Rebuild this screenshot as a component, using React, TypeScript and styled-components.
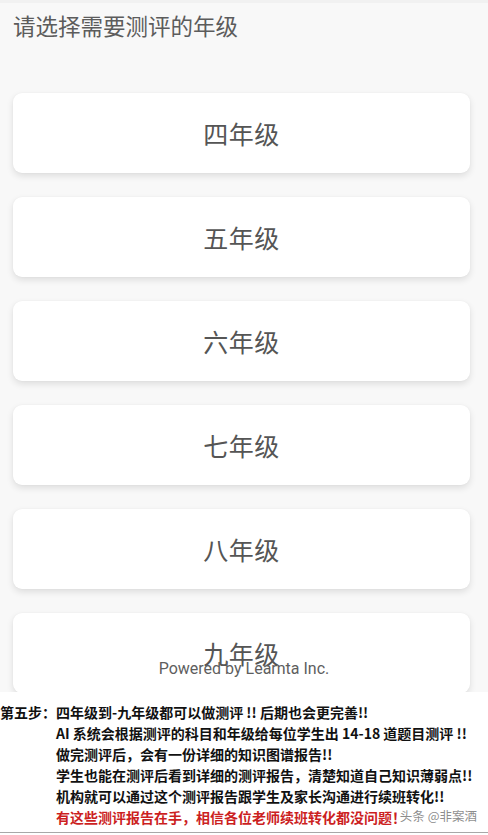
import React from 'react';
import styled, { createGlobalStyle } from 'styled-components';

const GlobalStyle = createGlobalStyle`
    html, body { margin: 0; padding: 0; background: #fff; }
    body { font-family: "Noto Sans CJK SC", "Noto Sans", sans-serif; }
`;

const Page = styled.div`
    width: 488px;
    height: 835px;
    display: flex;
    flex-direction: column;
    overflow: hidden;
`;

const Screen = styled.div`
    position: relative;
    height: 692px;
    flex-shrink: 0;
    overflow: hidden;
    background: #f8f8f8;
    border-top: 3px solid #f1f1f1;
    box-sizing: border-box;
`;

const Title = styled.div`
    padding: 7px 0 0 13px;
    height: 45px;
    font-size: 22.5px;
    line-height: 30px;
    color: #5c5c5c;
`;

const List = styled.div`
    display: flex;
    flex-direction: column;
    gap: 24px;
    padding: 38px 18px 0 13px;
`;

const GradeCard = styled.div`
    height: 80px;
    flex-shrink: 0;
    border-radius: 9px;
    background: #fff;
    box-shadow: 0 3px 7px rgba(0, 0, 0, 0.11), 0 0 2px rgba(0, 0, 0, 0.04);
    display: flex;
    align-items: center;
    justify-content: center;
    font-size: 25px;
    color: #555;
    letter-spacing: 0.5px;
`;

const Powered = styled.div`
    position: absolute;
    left: 0;
    right: 0;
    top: 656px;
    text-align: center;
    font-family: Roboto, "Noto Sans", sans-serif;
    font-size: 16px;
    color: #5e5e5e;
`;

const Notes = styled.div`
    position: relative;
    flex: 1;
    background: #fff;
    padding-top: 10px;
    border-bottom: 1px solid #a8a8a8;
    margin-bottom: 2px;
    font-family: "Noto Sans CJK SC", sans-serif;
    font-weight: 700;
    font-size: 14px;
    line-height: 21px;
    color: #111;
`;

const NoteRow = styled.div<{ $red?: boolean }>`
    display: flex;
    white-space: nowrap;
    color: ${p => (p.$red ? '#cc1f1f' : '#111')};
`;

const Lead = styled.span`
    width: 56px;
    flex-shrink: 0;
`;

const Watermark = styled.div`
    position: absolute;
    right: 11px;
    bottom: 6px;
    font-size: 12.5px;
    font-weight: 400;
    color: rgba(110, 110, 110, 0.8);
    background: rgba(255, 255, 255, 0.5);
`;

const grades = ['四年级', '五年级', '六年级', '七年级', '八年级', '九年级'];

const notes = [
    'AI 系统会根据测评的科目和年级给每位学生出 14-18 道题目测评 !!',
    '做完测评后，会有一份详细的知识图谱报告!!',
    '学生也能在测评后看到详细的测评报告，清楚知道自己知识薄弱点!!',
    '机构就可以通过这个测评报告跟学生及家长沟通进行续班转化!!',
];

export default function App() {
    return (
        <Page>
            <GlobalStyle />
            <Screen>
                <Title>请选择需要测评的年级</Title>
                <List>
                    {grades.map(g => (
                        <GradeCard key={g}>{g}</GradeCard>
                    ))}
                </List>
                <Powered>Powered by Learnta Inc.</Powered>
            </Screen>
            <Notes>
                <NoteRow>
                    <Lead>第五步：</Lead>
                    <span>四年级到-九年级都可以做测评 !!  后期也会更完善!!</span>
                </NoteRow>
                {notes.map(n => (
                    <NoteRow key={n}>
                        <Lead />
                        <span>{n}</span>
                    </NoteRow>
                ))}
                <NoteRow $red>
                    <Lead />
                    <span>有这些测评报告在手，相信各位老师续班转化都没问题！</span>
                </NoteRow>
                <Watermark>头条 @非案酒</Watermark>
            </Notes>
        </Page>
    );
}
